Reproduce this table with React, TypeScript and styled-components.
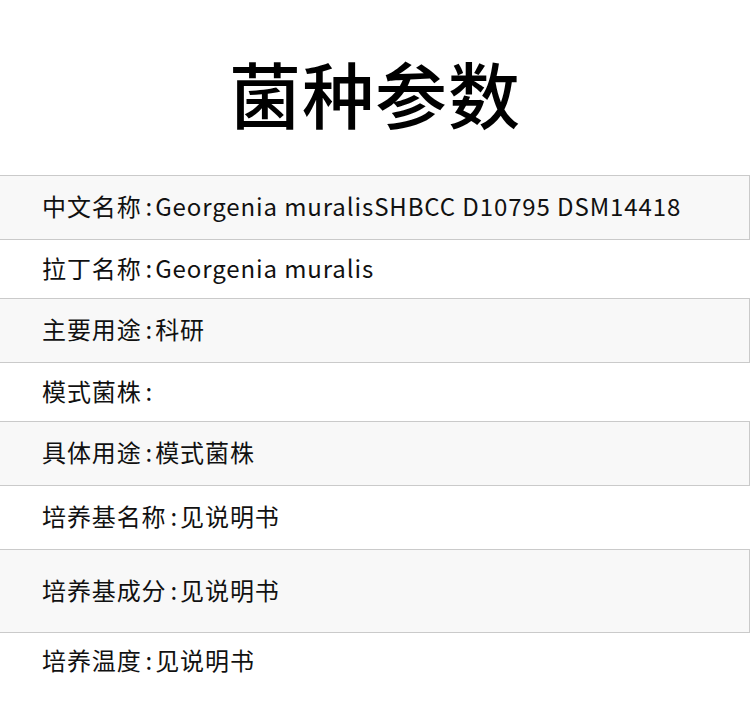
import React from "react";
import styled, { createGlobalStyle } from "styled-components";

const Global = createGlobalStyle`
  html, body { margin: 0; padding: 0; background: #ffffff; }
  body { font-family: "Noto Sans CJK SC", "Noto Sans", sans-serif; }
`;

const Page = styled.div`
  width: 750px;
  display: flex;
  flex-direction: column;
`;

const Header = styled.header`
  height: 175px;
  display: flex;
  align-items: flex-start;
  justify-content: center;
`;

const Title = styled.h1`
  margin: 0;
  padding-top: 47px;
  font-size: 72px;
  line-height: 90px;
  font-weight: 500;
  color: #000;
  letter-spacing: 1px;
`;

const Row = styled.div<{ $h: number; $shaded?: boolean }>`
  box-sizing: border-box;
  height: ${(p) => p.$h}px;
  display: flex;
  align-items: center;
  padding: 0 0 3px 42px;
  background: ${(p) => (p.$shaded ? "#f8f8f8" : "#ffffff")};
  border: ${(p) => (p.$shaded ? "1px solid #cacaca" : "none")};
  border-left: none;
`;

const Text = styled.span`
  font-size: 24px;
  line-height: 30px;
  color: #111;
  letter-spacing: 0.9px;
  white-space: nowrap;
`;

const Colon = styled.span`
  margin: 0 2px 0 4px;
`;

const rows: { label: string; value: string; h: number; shaded?: boolean }[] = [
  { label: "中文名称", value: "Georgenia muralisSHBCC D10795 DSM14418", h: 65, shaded: true },
  { label: "拉丁名称", value: "Georgenia muralis", h: 58 },
  { label: "主要用途", value: "科研", h: 65, shaded: true },
  { label: "模式菌株", value: "", h: 58 },
  { label: "具体用途", value: "模式菌株", h: 65, shaded: true },
  { label: "培养基名称", value: "见说明书", h: 63 },
  { label: "培养基成分", value: "见说明书", h: 84, shaded: true },
  { label: "培养温度", value: "见说明书", h: 57 },
];

export default function App() {
  return (
    <>
      <Global />
      <Page>
        <Header>
          <Title>菌种参数</Title>
        </Header>
        {rows.map((r, i) => (
          <Row key={i} $h={r.h} $shaded={r.shaded}>
            <Text>
              {r.label}
              <Colon>:</Colon>
              {r.value}
            </Text>
          </Row>
        ))}
      </Page>
    </>
  );
}
